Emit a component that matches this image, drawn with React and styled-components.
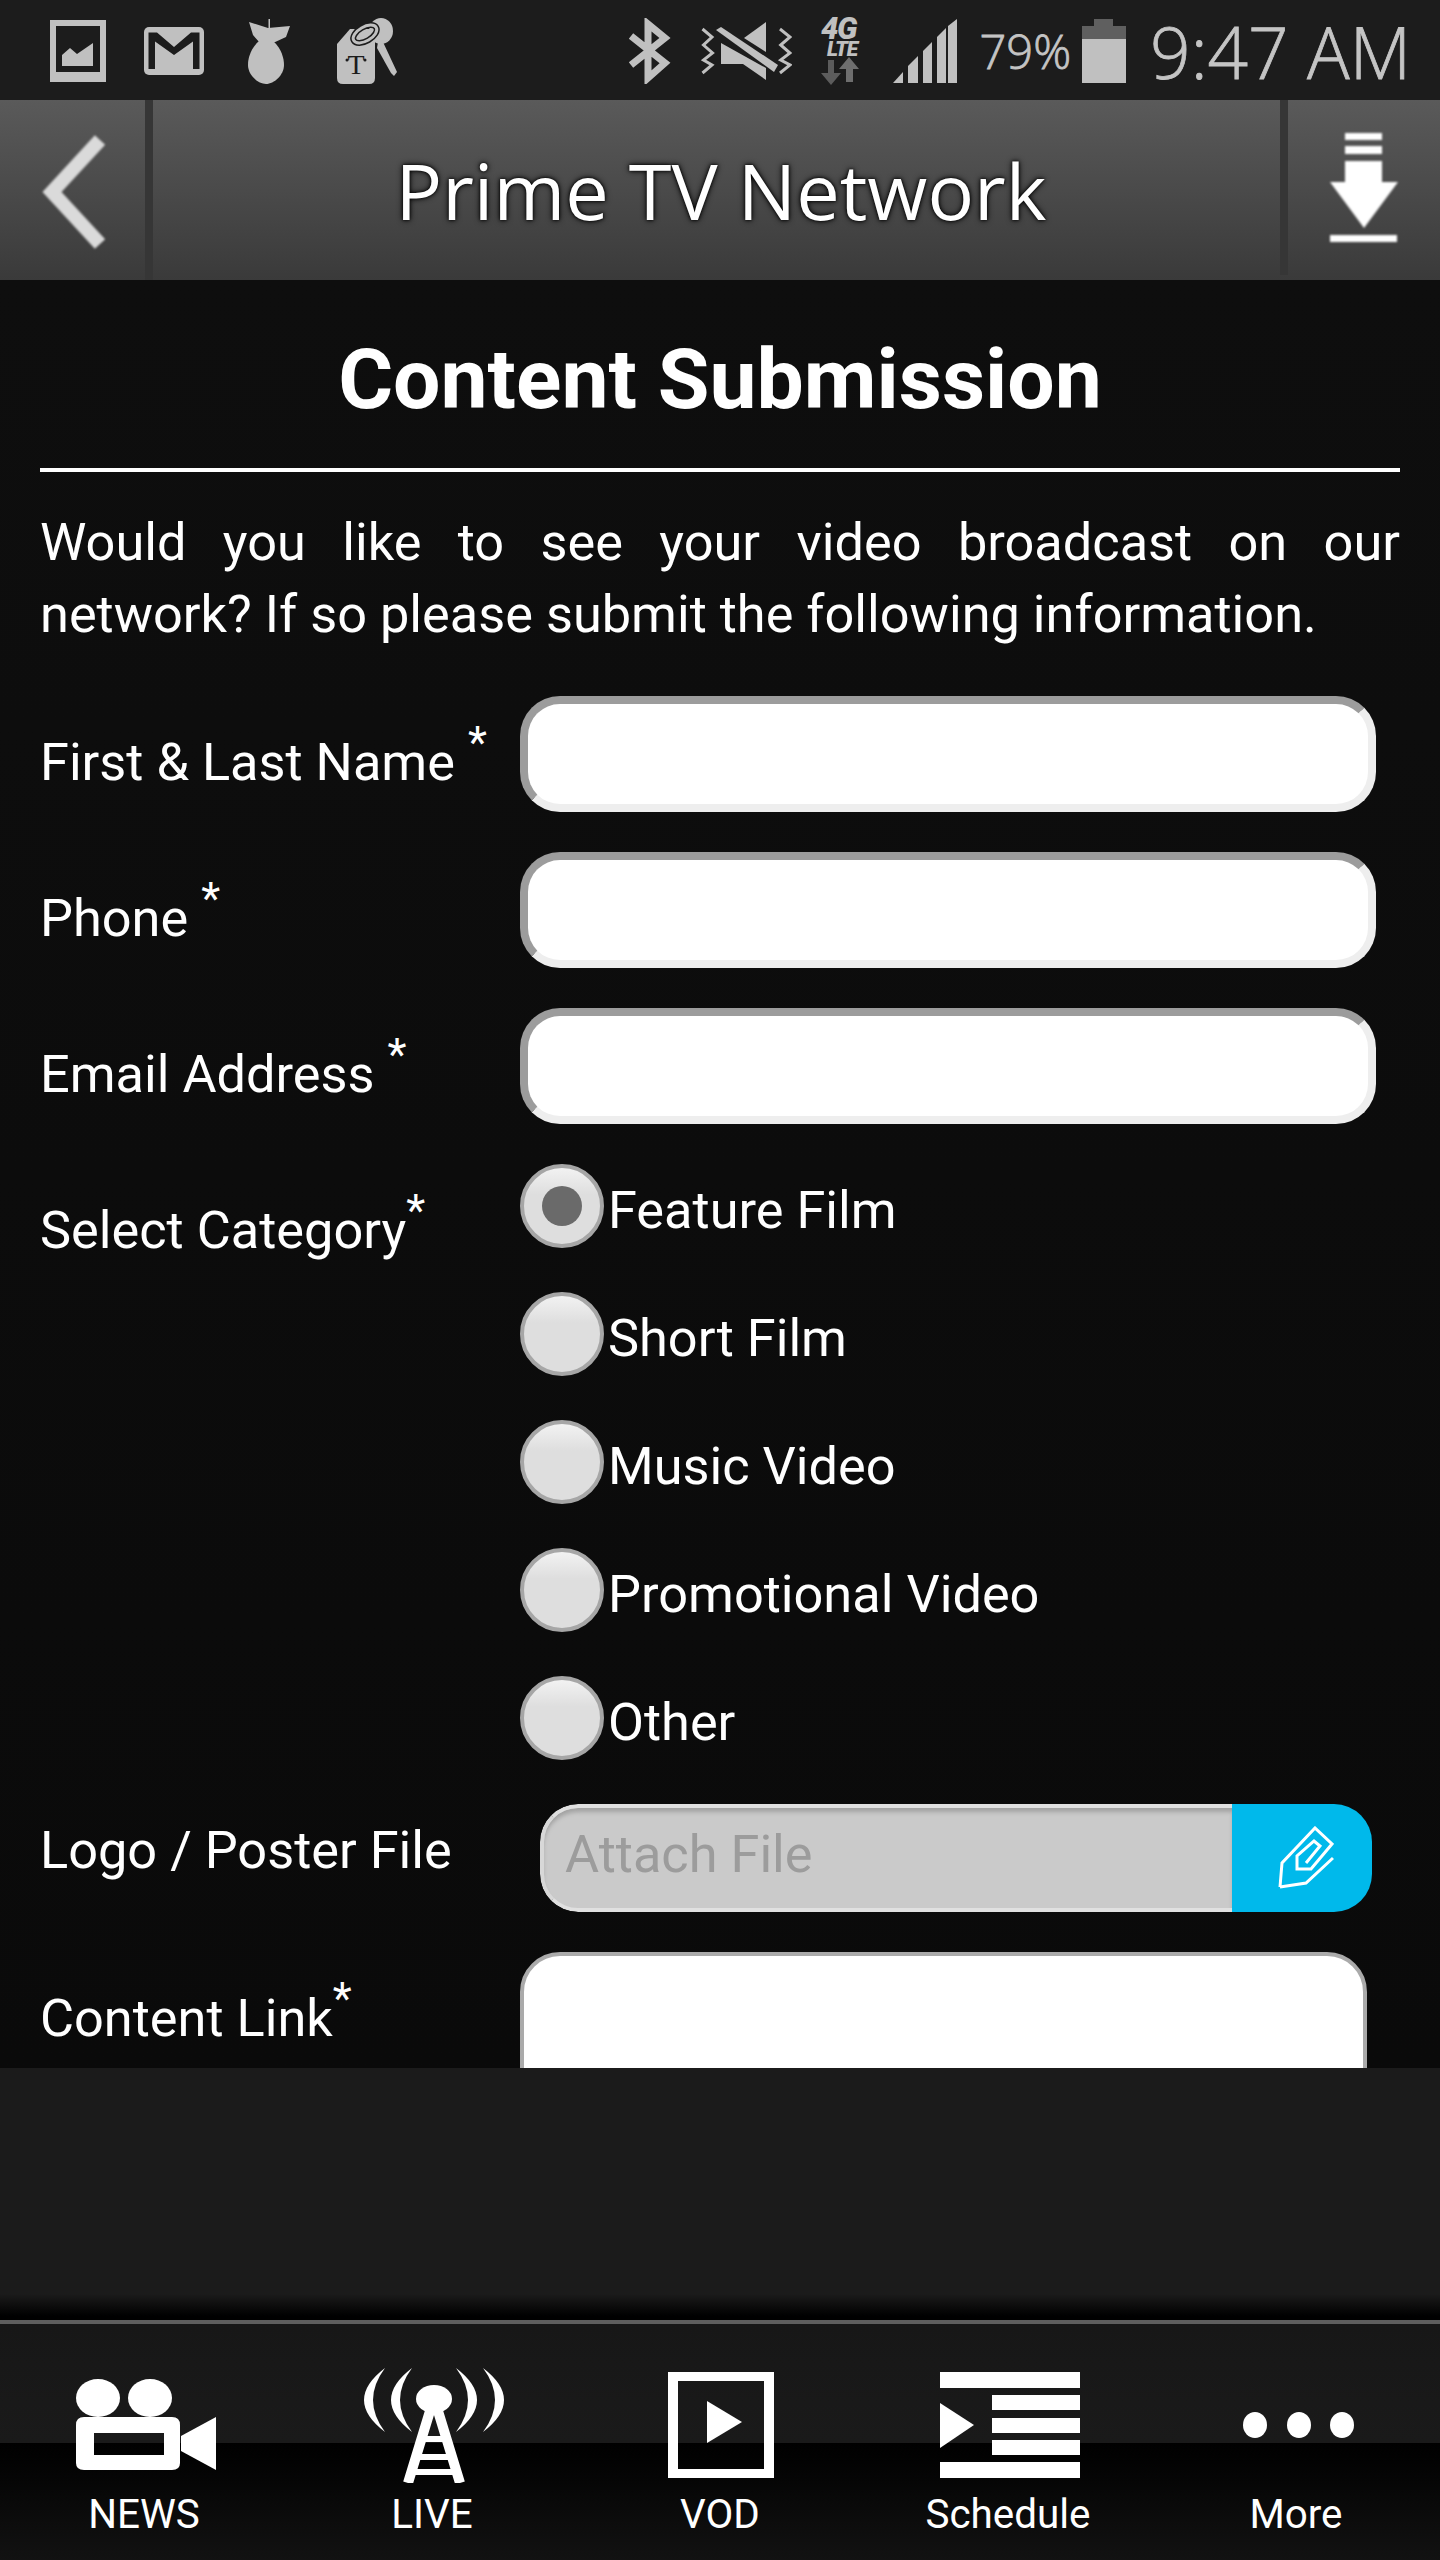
import React from 'react'
import styled, { createGlobalStyle } from 'styled-components'

const GlobalStyle = createGlobalStyle`
    html, body {
        margin: 0;
        padding: 0;
        background: #0d0d0d;
    }
    * {
        box-sizing: border-box;
    }
`

const Screen = styled.div`
    width: 1440px;
    height: 2560px;
    display: flex;
    flex-direction: column;
    font-family: Roboto, "Liberation Sans", sans-serif;
    color: #fff;
    overflow: hidden;
`

const StatusBar = styled.div`
    height: 100px;
    flex: none;
    background: #1c1c1c;
    display: flex;
    align-items: center;
    justify-content: space-between;
    padding: 2px 29px 0 50px;
    color: #c0c0c0;
`

const StatusGroup = styled.div`
    display: flex;
    align-items: center;
`

const StatusSlot = styled.div`
    display: flex;
    margin-left: ${props => props.$left || 0}px;
`

const StatusText = styled.span`
    font-family: "Open Sans", sans-serif;
    font-weight: 300;
    font-size: ${props => props.$size}px;
    line-height: 1;
    white-space: nowrap;
    margin-left: ${props => props.$left || 0}px;
    color: #c4c4c4;
    -webkit-text-stroke: 0.8px #c4c4c4;
`

const Header = styled.header`
    height: 180px;
    flex: none;
    display: flex;
    background: linear-gradient(#5a5a5a, #3a3a3a);
`

const HeaderButton = styled.div`
    width: ${props => props.$width}px;
    flex: none;
    display: flex;
    align-items: center;
    justify-content: center;
    padding-bottom: 3px;
`

const HeaderDivider = styled.div`
    width: 8px;
    flex: none;
    background: #363636;
    margin-bottom: ${props => props.$cut || 0}px;
`

const HeaderTitle = styled.h1`
    flex: 1;
    margin: 0;
    padding-left: 9px;
    text-align: center;
    font-family: "Open Sans", sans-serif;
    font-weight: 400;
    font-size: 77.5px;
    line-height: 180px;
    color: #fff;
    text-shadow: 0 0 6px #000, 0 0 3px #000;
`

const Content = styled.main`
    height: 1788px;
    flex: none;
    overflow: hidden;
    padding: 42px 40px 0;
    background: linear-gradient(#0e0e0e, #0a0a0a);
`

const Heading = styled.h2`
    margin: 0 0 30px;
    text-align: center;
    font-size: 84px;
    font-weight: 700;
    line-height: 116px;
`

const Rule = styled.div`
    height: 4px;
    background: #fff;
`

const Intro = styled.p`
    margin: 34px 0 46px;
    font-size: 52.3px;
    line-height: 72px;
    text-align: justify;
`

const Form = styled.form`
    display: flex;
    flex-direction: column;
    gap: 40px;
`

const Row = styled.div`
    display: grid;
    grid-template-columns: 480px 1fr;
`

const Label = styled.label`
    padding-top: ${props => props.$top ?? 30}px;
    font-size: 52.3px;
    line-height: 72px;
    white-space: nowrap;

    sup {
        font-size: 44px;
        line-height: 0;
        vertical-align: 22px;
    }
`

const TextField = styled.input`
    display: block;
    width: 856px;
    height: 116px;
    background: #fff;
    border: 8px solid;
    border-color: #9c9c9c #eee #eee #9c9c9c;
    border-radius: 40px;
    outline: none;
`

const RadioGroup = styled.div`
    display: flex;
    flex-direction: column;
    gap: 44px;
    padding-bottom: 4px;
`

const RadioOption = styled.label`
    display: flex;
    align-items: center;
    gap: 4px;
    height: 84px;
    font-size: 52.3px;
    line-height: 72px;
`

const RadioText = styled.span`
    padding-top: 8px;
`

const RadioInput = styled.input`
    appearance: none;
    margin: 0;
    width: 84px;
    height: 84px;
    flex: none;
    display: flex;
    align-items: center;
    justify-content: center;
    border: 4px solid #a6a6a6;
    border-radius: 50%;
    background: linear-gradient(#f2f2f2, #dedede 35%, #dedede);

    &:checked::after {
        content: "";
        width: 40px;
        height: 40px;
        border-radius: 50%;
        background: #6a6a6a;
    }
`

const FileField = styled.div`
    width: 832px;
    height: 108px;
    margin-left: 20px;
    display: flex;
    border-radius: 38px;
    overflow: hidden;
`

const FileName = styled.div`
    flex: 1;
    display: flex;
    align-items: center;
    padding: 0 0 8px 21px;
    background: #cacaca;
    border-top: 4px solid #e0e0e0;
    border-bottom: 4px solid #e0e0e0;
    border-left: 4px solid #d8d8d8;
    border-radius: 38px 0 0 38px;
    box-shadow: inset 0 5px 4px -1px #a2a2a2;
    color: #9c9c9c;
    font-size: 52.3px;
`

const FileButton = styled.div`
    width: 140px;
    flex: none;
    display: flex;
    align-items: center;
    justify-content: center;
    padding-left: 8px;
    background: #00b9eb;
`

const ContentLink = styled.textarea`
    display: block;
    width: 847px;
    height: 220px;
    background: #fff;
    border: 4px solid #aaa;
    border-radius: 40px;
    outline: none;
    resize: none;
`

const Filler = styled.div`
    flex: 1;
    background: linear-gradient(#1b1b1b 0, #1b1b1b 226px, #000 248px, #000 100%);
`

const TabBar = styled.nav`
    height: 240px;
    flex: none;
    display: grid;
    grid-template-columns: repeat(5, 1fr);
    padding-top: 36px;
    border-top: 4px solid #5e5e5e;
    background: linear-gradient(#171717 0, #1a1a1a 119px, #000 119px, #121212 100%);
`

const Tab = styled.div`
    display: flex;
    flex-direction: column;
    align-items: center;
`

const TabIcon = styled.div`
    height: 130px;
    display: flex;
    align-items: center;
    justify-content: center;
    margin-left: ${props => props.$shift || 0}px;
`

const TabLabel = styled.span`
    font-size: 40.4px;
    line-height: 49px;
    color: #fff;
`

const GalleryIcon = () => (
    <svg width="56" height="62" viewBox="0 0 56 62" fill="currentColor">
        <path fillRule="evenodd" d="M0 0H56V62H0ZM6 6V52H50V6Z" />
        <path d="M12 46V35L20 28 27 34 43 23V46Z" />
    </svg>
)

const MailIcon = () => (
    <svg width="60" height="48" viewBox="0 0 60 48" fill="currentColor">
        <rect width="60" height="48" rx="5" />
        <path d="M4.5 5.5H13L30 20 47 5.5H55.5V42H49V14.5L30 28 11 14.5V42H4.5Z" fill="#1c1c1c" />
    </svg>
)

const BombIcon = () => (
    <svg width="42" height="65" viewBox="0 0 42 65" fill="currentColor">
        <path d="M20.5 0H22V12H20.5Z" />
        <path d="M1 3 20 9 42 7 38 18 25 24H12L5 16Z" />
        <path d="M12 21C2 30 0 40 0 46 0 56 10 65 18 65 26 65 36 56 36 46 36 40 34 30 25 22Z" />
    </svg>
)

const KeyTagIcon = () => (
    <svg width="60" height="67" viewBox="0 0 60 67" fill="currentColor">
        <ellipse cx="44" cy="13" rx="12" ry="13" />
        <path d="M41 24 46 24 60 54 57 58 54 55 40 30Z" />
        <path d="M0 26 13 11H33Q38 11 38 18V60Q38 66 32 66H6Q0 66 0 60Z" />
        <ellipse cx="28" cy="16" rx="13" ry="7" transform="rotate(-30 28 16)" fill="none" stroke="#1c1c1c" strokeWidth="6" />
        <ellipse cx="28" cy="16" rx="13" ry="7" transform="rotate(-30 28 16)" fill="none" stroke="currentColor" strokeWidth="3" />
        <text x="19" y="56" textAnchor="middle" fontFamily="Liberation Serif, serif" fontSize="28" fill="#1c1c1c">T</text>
        <circle cx="10" cy="42" r="1.5" fill="#1c1c1c" />
        <circle cx="28" cy="42" r="1.5" fill="#1c1c1c" />
    </svg>
)

const BluetoothIcon = () => (
    <svg width="44" height="66" viewBox="0 0 44 66" fill="none" stroke="currentColor" strokeWidth="7">
        <path d="M3 47 37 20 20 6V60L37 45 3 18" />
    </svg>
)

const MuteVibrateIcon = () => (
    <svg width="92" height="58" viewBox="0 0 92 58" fill="currentColor">
        <path d="M2.5 7 12 15 3.5 23 12.5 31 3.5 38 12 43 2.5 51" fill="none" stroke="currentColor" strokeWidth="3" />
        <path d="M80 7 90 15 80.7 23 90 31 80.7 38 90 43 80 51" fill="none" stroke="currentColor" strokeWidth="3" />
        <path d="M66 0V30L44 16Z" />
        <path d="M21 21V42H43L66 58V46Z" />
        <path d="M16 8 21 5 78 43 74 50Z" />
    </svg>
)

const NetworkIcon = () => (
    <svg width="40" height="69" viewBox="0 0 40 69" overflow="visible">
        <text x="0" y="22" fontFamily="Roboto, sans-serif" fontWeight="900" fontStyle="italic" fontSize="31" letterSpacing="-1.5" fill="#c0c0c0">4G</text>
        <text x="6" y="39" fontFamily="Roboto, sans-serif" fontWeight="900" fontStyle="italic" fontSize="21" letterSpacing="-1" fill="#c0c0c0">LTE</text>
        <path d="M7 43H13V56H20L10 68 0 56H7Z" fill="#5c5c5c" />
        <path d="M25 65V52H18L28 40 38 52H32V65Z" fill="#6e6e6e" />
    </svg>
)

const SignalIcon = () => (
    <svg width="64" height="64" viewBox="0 0 64 64" fill="currentColor">
        <path d="M0 64 10 53V64Z" />
        <path d="M15 64V47L25 37V64Z" />
        <path d="M30 64V32L39 23V64Z" />
        <path d="M44 64V18L53 9V64Z" />
        <path d="M55 64V7L64 0V64Z" />
    </svg>
)

const BatteryIcon = () => (
    <svg width="44" height="64" viewBox="0 0 44 64">
        <path d="M12 0H31V7H44V20H0V7H12Z" fill="#5f5f5f" />
        <path d="M0 20H44V64H0Z" fill="#c0c0c0" />
    </svg>
)

const BackIcon = () => (
    <svg width="70" height="124" viewBox="0 0 70 124" fill="none">
        <path d="M62 13 14 65 62 117" stroke="#dadada" strokeWidth="14" style={{ filter: 'blur(1.2px)' }} />
    </svg>
)

const DownloadIcon = () => (
    <svg width="68" height="112" viewBox="0 0 68 112" fill="#fff" style={{ filter: 'blur(0.8px)' }}>
        <path d="M15 0H52V7H15ZM15 13H52V21H15Z" />
        <path d="M15 28H52V49H68L34 95 0 49H15Z" />
        <path d="M0 102H67V109H0Z" />
    </svg>
)

const ClipIcon = () => (
    <svg width="56" height="64" viewBox="0 0 56 64" fill="none" stroke="#fff" strokeWidth="3">
        <path d="M2 61 4 37 37 2 54 18 33 43 19 43V30L36 15 42 20 28 37" />
        <path d="M55 32 28 57 2 61" />
    </svg>
)

const CameraIcon = () => (
    <svg width="140" height="92" viewBox="0 0 140 92" fill="#fff">
        <ellipse cx="22" cy="19" rx="22" ry="19" />
        <ellipse cx="74" cy="19" rx="22" ry="19" />
        <path fillRule="evenodd" d="M8 38H96Q104 38 104 46V84Q104 91 96 91H8Q0 91 0 84V46Q0 38 8 38ZM18 54V76H88V54Z" />
        <path d="M105 57 140 38V91L105 72Z" />
    </svg>
)

const TowerIcon = () => (
    <svg width="140" height="116" viewBox="0 0 140 116" fill="#fff">
        <path d="M21 1Q-21 33 21 65Q-3 33 21 1Z" />
        <path d="M48 1Q6 33 48 65Q24 33 48 1Z" />
        <path d="M119 1Q161 33 119 65Q143 33 119 1Z" />
        <path d="M92 1Q134 33 92 65Q116 33 92 1Z" />
        <ellipse cx="70" cy="32" rx="18" ry="14" />
        <path d="M66 44 44 116M74 44 96 116" stroke="#fff" strokeWidth="10" />
        <path d="M60 72H80M54 90H86M48 105H92" stroke="#fff" strokeWidth="6" />
    </svg>
)

const VodIcon = () => (
    <svg width="106" height="106" viewBox="0 0 106 106" fill="#fff">
        <path fillRule="evenodd" d="M0 0H106V106H0ZM10 9V97H96V9Z" />
        <path d="M39 29 74 50 39 71Z" />
    </svg>
)

const ScheduleIcon = () => (
    <svg width="140" height="106" viewBox="0 0 140 106" fill="#fff">
        <path d="M0 0H140V16H0ZM52 23H140V38H52ZM52 46H140V61H52ZM52 68H140V83H52ZM0 90H140V106H0Z" />
        <path d="M0 31 34 53 0 76Z" />
    </svg>
)

const MoreIcon = () => (
    <svg width="111" height="26" viewBox="0 0 111 26" fill="#fff">
        <ellipse cx="12" cy="13" rx="12" ry="13" />
        <ellipse cx="56" cy="13" rx="12" ry="13" />
        <ellipse cx="99" cy="13" rx="12" ry="13" />
    </svg>
)

const categories = ['Feature Film', 'Short Film', 'Music Video', 'Promotional Video', 'Other']

const tabs = [
    { label: 'NEWS', icon: <CameraIcon />, shift: 4 },
    { label: 'LIVE', icon: <TowerIcon />, shift: 4 },
    { label: 'VOD', icon: <VodIcon />, shift: 2 },
    { label: 'Schedule', icon: <ScheduleIcon />, shift: 4 },
    { label: 'More', icon: <MoreIcon />, shift: 4 },
]

const App = () => {
    return (
        <Screen>
            <GlobalStyle />
            <StatusBar>
                <StatusGroup>
                    <StatusSlot><GalleryIcon /></StatusSlot>
                    <StatusSlot $left={38}><MailIcon /></StatusSlot>
                    <StatusSlot $left={44}><BombIcon /></StatusSlot>
                    <StatusSlot $left={47}><KeyTagIcon /></StatusSlot>
                </StatusGroup>
                <StatusGroup>
                    <StatusSlot><BluetoothIcon /></StatusSlot>
                    <StatusSlot $left={28}><MuteVibrateIcon /></StatusSlot>
                    <StatusSlot $left={29}><NetworkIcon /></StatusSlot>
                    <StatusSlot $left={32}><SignalIcon /></StatusSlot>
                    <StatusText $size={47} $left={23}>79%</StatusText>
                    <StatusSlot $left={11}><BatteryIcon /></StatusSlot>
                    <StatusText $size={71} $left={24}>9:47 AM</StatusText>
                </StatusGroup>
            </StatusBar>
            <Header>
                <HeaderButton $width={145}><BackIcon /></HeaderButton>
                <HeaderDivider />
                <HeaderTitle>Prime TV Network</HeaderTitle>
                <HeaderDivider $cut={5} />
                <HeaderButton $width={152}><DownloadIcon /></HeaderButton>
            </Header>
            <Content>
                <Heading>Content Submission</Heading>
                <Rule />
                <Intro>Would you like to see your video broadcast on our network? If so please submit the following information.</Intro>
                <Form>
                    <Row>
                        <Label>First &amp; Last Name <sup>*</sup></Label>
                        <TextField type="text" />
                    </Row>
                    <Row>
                        <Label>Phone <sup>*</sup></Label>
                        <TextField type="text" />
                    </Row>
                    <Row>
                        <Label>Email Address <sup>*</sup></Label>
                        <TextField type="text" />
                    </Row>
                    <Row>
                        <Label>Select Category<sup>*</sup></Label>
                        <RadioGroup>
                            {categories.map((name, i) => (
                                <RadioOption key={name}>
                                    <RadioInput type="radio" name="category" defaultChecked={i === 0} />
                                    <RadioText>{name}</RadioText>
                                </RadioOption>
                            ))}
                        </RadioGroup>
                    </Row>
                    <Row>
                        <Label $top={10}>Logo / Poster File</Label>
                        <FileField>
                            <FileName>Attach File</FileName>
                            <FileButton><ClipIcon /></FileButton>
                        </FileField>
                    </Row>
                    <Row>
                        <Label>Content Link<sup>*</sup></Label>
                        <ContentLink />
                    </Row>
                </Form>
            </Content>
            <Filler />
            <TabBar>
                {tabs.map(tab => (
                    <Tab key={tab.label}>
                        <TabIcon $shift={tab.shift}>{tab.icon}</TabIcon>
                        <TabLabel>{tab.label}</TabLabel>
                    </Tab>
                ))}
            </TabBar>
        </Screen>
    )
}

export default App
